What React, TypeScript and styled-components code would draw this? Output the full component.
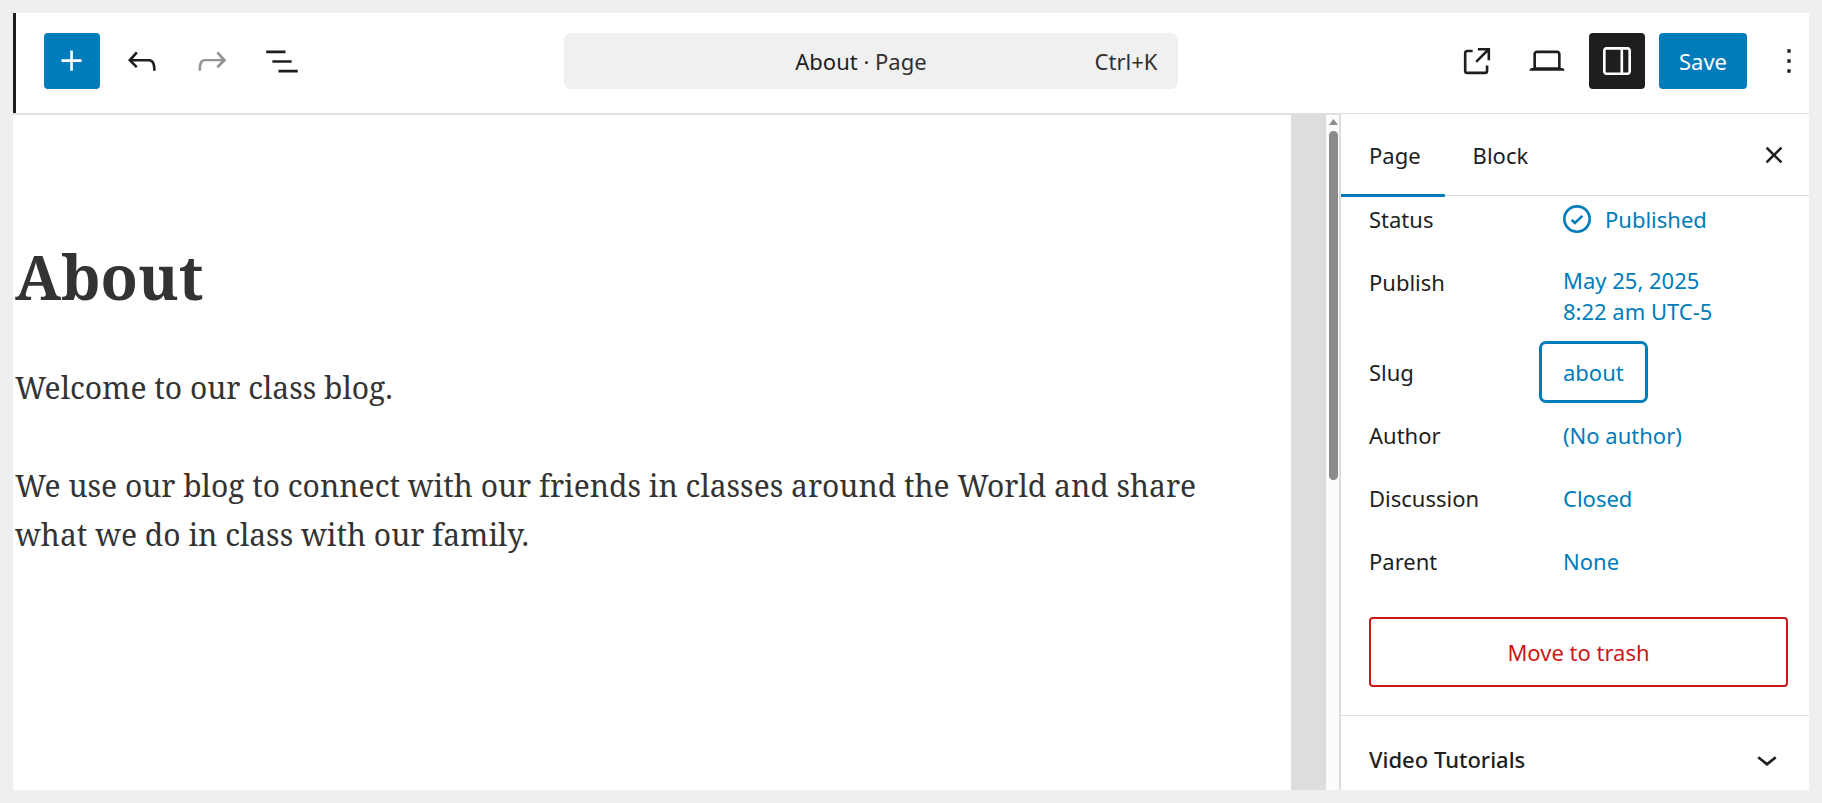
import React from 'react';
import styled, { createGlobalStyle } from 'styled-components';

const ink = '#1e1e1e';
const accent = '#007cba';
const danger = '#cc1818';
const line = '#dddddd';

const GlobalStyle = createGlobalStyle`
  *, *::before, *::after { box-sizing: border-box; }
  body {
    margin: 0;
    background: #efefef;
    color: ${ink};
    font-family: 'Segoe UI', 'Noto Sans', 'Open Sans', sans-serif;
    font-size: 22px;
    line-height: 32px;
  }
  button { font: inherit; color: inherit; cursor: pointer; }
`;

const Frame = styled.div`
  display: flex;
  flex-direction: column;
  height: 100vh;
  border: 13px solid #efefef;
  background: #fff;
  overflow: hidden;
`;

const Header = styled.header`
  display: grid;
  grid-template-columns: 20fr minmax(240px, 614px) 23fr;
  align-items: center;
  flex: none;
  height: 100px;
  padding-bottom: 4px;
  border-left: 3px solid ${ink};
`;

const Tools = styled.div<{ $end?: boolean }>`
  display: flex;
  gap: 14px;
  padding-left: 28px;
  justify-content: ${(p) => (p.$end ? 'flex-end' : 'flex-start')};
`;

const ToolButton = styled.button<{ $tone?: 'primary' | 'pressed' }>`
  display: flex;
  align-items: center;
  justify-content: center;
  flex: none;
  width: 56px;
  height: 56px;
  padding: 0;
  border: 0;
  border-radius: 4px;
  color: ${(p) => (p.$tone ? '#fff' : ink)};
  background: ${(p) => (p.$tone === 'primary' ? accent : p.$tone === 'pressed' ? ink : 'transparent')};
  &:disabled { color: #949494; cursor: default; }
`;

const SaveButton = styled(ToolButton)`
  width: 88px;
`;

const MoreButton = styled(ToolButton)`
  width: 48px;
  padding-left: 8px;
`;

const CommandBar = styled.button`
  display: flex;
  align-items: center;
  height: 56px;
  padding: 0 21px;
  border: 0;
  border-radius: 7px;
  background: #f0f0f0;
`;

const CommandTitle = styled.span`
  flex: 1;
  padding-left: 42px;
`;

const Muted = styled.span`
  color: #2f2f2f;
`;

const Workspace = styled.div`
  display: flex;
  flex: 1;
  min-height: 0;
`;

const CanvasArea = styled.main`
  display: flex;
  flex: 1;
  min-width: 0;
  border-top: 2px solid #e0e0e0;
`;

const Page = styled.article`
  flex: 1;
  min-width: 0;
  padding: 120px 80px 0 2px;
  color: #333;
  font-family: 'Noto Serif', 'DejaVu Serif', serif;
  font-size: 30px;
  line-height: 49px;
`;

const Title = styled.h1`
  margin: 0 0 44px;
  font-size: 61px;
  line-height: 84px;
  font-weight: 700;
`;

const Paragraph = styled.p`
  margin: 0 0 49px;
`;

const Gutter = styled.div`
  flex: none;
  width: 35px;
  background: ${line};
`;

const ScrollTrack = styled.div`
  display: flex;
  flex-direction: column;
  align-items: center;
  flex: none;
  width: 13px;
  padding: 4px 0 0 2px;
  background: #fcfcfa;
`;

const ScrollThumb = styled.div`
  width: 9px;
  height: 52%;
  margin-top: 6px;
  border-radius: 5px;
  background: #8b8b8b;
`;

const Sidebar = styled.aside`
  flex: none;
  width: 470px;
  border-top: 1px solid ${line};
  border-left: 2px solid ${line};
  overflow: hidden;
`;

const SidebarHeader = styled.div`
  display: flex;
  align-items: center;
  height: 82px;
  padding-right: 7px;
  border-bottom: 1px solid ${line};
`;

const Tabs = styled.div`
  display: flex;
  flex: 1;
`;

const Tab = styled.button<{ $active?: boolean }>`
  height: 84px;
  padding: 1px 24px 0 28px;
  border: 0;
  background: linear-gradient(${accent}, ${accent}) bottom / 100% ${(p) => (p.$active ? 3 : 0)}px no-repeat;
`;

const Details = styled.div`
  display: flex;
  flex-direction: column;
  gap: 7px;
  margin-top: -5px;
  padding: 0 21px 28px 28px;
`;

const DetailRow = styled.div`
  display: flex;
  align-items: flex-start;
`;

const DetailLabel = styled.span`
  flex: none;
  width: 173px;
  padding: 12px 0;
`;

const DetailValue = styled.button<{ $focused?: boolean }>`
  display: flex;
  align-items: center;
  gap: 7px;
  padding: 12px 21px;
  border: 0;
  border-radius: 4px;
  outline: ${(p) => (p.$focused ? `3px solid ${accent}` : 'none')};
  background: none;
  color: ${accent};
  line-height: 31px;
  text-align: left;
  min-height: 56px;
`;

const DateValue = styled(DetailValue)`
  padding-top: 11px;
  padding-bottom: 10px;
`;

const StatusIcon = styled.span`
  display: flex;
  height: 32px;
  align-items: center;
  margin-left: -7px;
`;

const TrashButton = styled.button`
  height: 70px;
  margin-top: 21px;
  border: 2px solid ${danger};
  border-radius: 4px;
  background: none;
  color: ${danger};
`;

const PanelToggle = styled.button`
  display: flex;
  align-items: center;
  justify-content: space-between;
  width: 100%;
  height: 86px;
  padding: 0 21px 0 28px;
  border: 0;
  border-top: 1px solid #e0e0e0;
  background: none;
  font-weight: 500;
`;

const paths = {
  plus: 'M11 12.5V17.5H12.5V12.5H17.5V11H12.5V6H11V11H6V12.5H11Z',
  undo: 'M18.3 11.7c-.6-.6-1.4-.9-2.3-.9H6.7l2.9-3.3-1.1-1-4.5 5L8.5 16l1-1-2.7-2.7H16c.5 0 .9.2 1.3.5 1 1 1 3.4 1 4.5v.3h1.5v-.2c0-1.5 0-4.3-1.5-5.7z',
  redo: 'M15.6 6.5l-1.1 1 2.9 3.3H8c-.9 0-1.7.3-2.3.9-1.4 1.5-1.4 4.2-1.4 5.6v.2h1.5v-.3c0-1.1 0-3.5 1-4.5.3-.3.7-.5 1.3-.5h9.2L14.5 15l1.1 1.1 4.6-4.6-4.6-5z',
  list: 'M3 6h11v1.5H3V6Zm3.5 5.5h11V13h-11v-1.5ZM21 17H10v1.5h11V17Z',
  external:
    'M19.5 4.5h-7V6h4.44l-5.97 5.97 1.06 1.06L18 7.06v4.44h1.5v-7Zm-13 1a2 2 0 0 0-2 2v10a2 2 0 0 0 2 2h10a2 2 0 0 0 2-2v-3H17v3a.5.5 0 0 1-.5.5h-10a.5.5 0 0 1-.5-.5v-10a.5.5 0 0 1 .5-.5h3V5.5h-3Z',
  desktop:
    'M20.5 16h-.7V8c0-1.1-.9-2-2-2H6.2c-1.1 0-2 .9-2 2v8h-.7c-.8 0-1.5.7-1.5 1.5h20c0-.8-.7-1.5-1.5-1.5zM5.7 8c0-.3.2-.5.5-.5h11.6c.3 0 .5.2.5.5v7.6H5.7V8z',
  drawer:
    'M18 4H6c-1.1 0-2 .9-2 2v12c0 1.1.9 2 2 2h12c1.1 0 2-.9 2-2V6c0-1.1-.9-2-2-2zm-4 14.5H6c-.3 0-.5-.2-.5-.5V6c0-.3.2-.5.5-.5h8v13zm4.5-.5c0 .3-.2.5-.5.5h-2.5v-13H18c.3 0 .5.2.5.5v12z',
  more: 'M13 19h-2v-2h2v2zm0-6h-2v-2h2v2zm0-6h-2V5h2v2z',
  close:
    'M12 13.06l3.712 3.713 1.061-1.06L13.061 12l3.712-3.712-1.06-1.06L12 10.938 8.288 7.227l-1.061 1.06L10.939 12l-3.712 3.712 1.06 1.061L12 13.061z',
  chevron: 'M17.5 11.6L12 16l-5.5-4.4.9-1.2L12 14l4.5-3.6 1 1.2z',
};

const Icon = ({ name }: { name: keyof typeof paths }) => (
  <svg width="42" height="42" viewBox="0 0 24 24" fill="currentColor" aria-hidden="true">
    <path d={paths[name]} />
  </svg>
);

const PublishedIcon = () => (
  <svg width="42" height="42" viewBox="0 0 24 24" fill="none" stroke="currentColor" strokeWidth="1.5" aria-hidden="true">
    <circle cx="12" cy="12" r="7.25" />
    <path d="M8.9 12.5l1.9 1.7 4.3-4" />
  </svg>
);

const details = [
  { label: 'Slug', value: 'about', focused: true },
  { label: 'Author', value: '(No author)' },
  { label: 'Discussion', value: 'Closed' },
  { label: 'Parent', value: 'None' },
];

export default function App() {
  return (
    <>
      <GlobalStyle />
      <Frame>
        <Header>
          <Tools>
            <ToolButton $tone="primary" aria-label="Block inserter"><Icon name="plus" /></ToolButton>
            <ToolButton aria-label="Undo"><Icon name="undo" /></ToolButton>
            <ToolButton aria-label="Redo" disabled><Icon name="redo" /></ToolButton>
            <ToolButton aria-label="Document overview"><Icon name="list" /></ToolButton>
          </Tools>
          <CommandBar>
            <CommandTitle>About <Muted>· Page</Muted></CommandTitle>
            <Muted>Ctrl+K</Muted>
          </CommandBar>
          <Tools $end>
            <ToolButton aria-label="View page"><Icon name="external" /></ToolButton>
            <ToolButton aria-label="Preview"><Icon name="desktop" /></ToolButton>
            <ToolButton $tone="pressed" aria-label="Settings" aria-pressed="true"><Icon name="drawer" /></ToolButton>
            <SaveButton $tone="primary">Save</SaveButton>
            <MoreButton aria-label="Options"><Icon name="more" /></MoreButton>
          </Tools>
        </Header>
        <Workspace>
          <CanvasArea>
            <Page>
              <Title>About</Title>
              <Paragraph>Welcome to our class blog.</Paragraph>
              <Paragraph>
                We use our blog to connect with our friends in classes around the World and share what we do in class
                with our family.
              </Paragraph>
            </Page>
            <Gutter />
            <ScrollTrack>
              <svg width="9" height="6" viewBox="0 0 9 6" fill="#8b8b8b" aria-hidden="true">
                <path d="M4.5 0L9 6H0z" />
              </svg>
              <ScrollThumb />
            </ScrollTrack>
          </CanvasArea>
          <Sidebar>
            <SidebarHeader>
              <Tabs role="tablist">
                <Tab $active role="tab" aria-selected="true">Page</Tab>
                <Tab role="tab" aria-selected="false">Block</Tab>
              </Tabs>
              <ToolButton aria-label="Close settings"><Icon name="close" /></ToolButton>
            </SidebarHeader>
            <Details>
              <DetailRow>
                <DetailLabel>Status</DetailLabel>
                <DetailValue>
                  <StatusIcon><PublishedIcon /></StatusIcon>
                  Published
                </DetailValue>
              </DetailRow>
              <DetailRow>
                <DetailLabel>Publish</DetailLabel>
                <DateValue>May 25, 2025<br />8:22 am UTC-5</DateValue>
              </DetailRow>
              {details.map((d) => (
                <DetailRow key={d.label}>
                  <DetailLabel>{d.label}</DetailLabel>
                  <DetailValue $focused={d.focused}>{d.value}</DetailValue>
                </DetailRow>
              ))}
              <TrashButton>Move to trash</TrashButton>
            </Details>
            <PanelToggle aria-expanded="false">Video Tutorials<Icon name="chevron" /></PanelToggle>
          </Sidebar>
        </Workspace>
      </Frame>
    </>
  );
}
